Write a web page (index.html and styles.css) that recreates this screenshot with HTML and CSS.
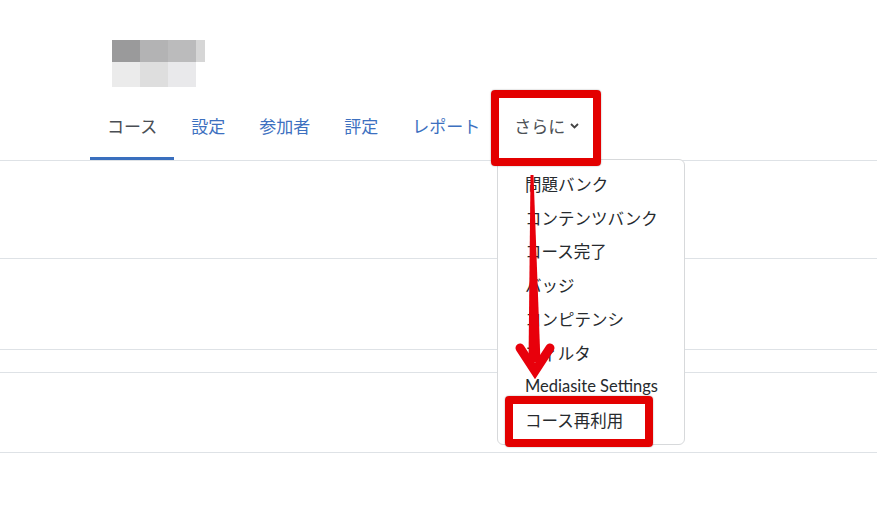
FILE: index.html
```html
<!DOCTYPE html>
<html lang="ja">
<head>
<meta charset="utf-8">
<title>コース</title>
<link rel="stylesheet" href="styles.css">
</head>
<body>
<div class="page">
  <header class="head">
    <div class="logo">
      <span class="b b1"></span><span class="b b2"></span><span class="b b3"></span><span class="b b4"></span>
      <span class="b b5"></span><span class="b b6"></span><span class="b b7"></span><span class="b b8"></span>
    </div>
  </header>
  <nav class="tabs">
    <ul class="tab-list">
      <li class="tab active">コース</li>
      <li class="tab">設定</li>
      <li class="tab">参加者</li>
      <li class="tab">評定</li>
      <li class="tab">レポート</li>
      <li class="tab more">さらに<svg class="chev" width="9" height="6" viewBox="0 0 9 6"><path d="M1 1 L4.5 4.5 L8 1" fill="none" stroke="#444" stroke-width="1.8"/></svg></li>
    </ul>
  </nav>
  <div class="sec s1"></div>
  <div class="sec s2"></div>
  <div class="sec s3"></div>
  <div class="sec s4"></div>

  <ul class="dropdown">
    <li class="dd-item">問題バンク</li>
    <li class="dd-item">コンテンツバンク</li>
    <li class="dd-item">コース完了</li>
    <li class="dd-item">バッジ</li>
    <li class="dd-item">コンピテンシ</li>
    <li class="dd-item">フィルタ</li>
    <li class="dd-item">Mediasite Settings</li>
    <li class="dd-item">コース再利用</li>
  </ul>

  <div class="mark mark-more"></div>
  <div class="mark mark-reuse"></div>
  <svg class="arrow" width="60" height="220" viewBox="505 165 60 220">
    <polygon points="530.5,175 533.5,175 540.5,362 528.5,362" fill="#e8000b"/>
    <path d="M520 348 L535 371 L550 348" fill="none" stroke="#e8000b" stroke-width="9" stroke-linecap="round" stroke-linejoin="miter"/>
  </svg>
</div>
</body>
</html>
```
FILE: styles.css
```css
html, body {
  margin: 0;
  padding: 0;
  background: #fff;
}
.page {
  position: relative;
  width: 877px;
  height: 510px;
  overflow: hidden;
  font-family: "Lato", "Noto Sans CJK JP", sans-serif;
}
.head {
  padding: 40px 0 0 112px;
}
.logo {
  display: grid;
  grid-template-columns: 28px 28px 28px 9px;
  grid-template-rows: 22px 25px;
  width: 93px;
}
.b1 { background: #9a9a9b; }
.b2 { background: #b3b3b4; }
.b3 { background: #bbbbbc; }
.b4 { background: #d6d6d6; }
.b5 { background: #ebebeb; }
.b6 { background: #dedede; }
.b7 { background: #e9e9eb; }
.b8 { background: #fff; }

.tabs {
  margin-top: 8px;
  border-bottom: 1px solid #dee2e6;
}
.tab-list {
  list-style: none;
  margin: 0;
  padding: 0 0 0 90px;
  display: flex;
  height: 65px;
}
.tab {
  display: flex;
  align-items: center;
  padding: 0 17px 5px;
  font-size: 17px;
  color: #3d70c0;
  box-sizing: border-box;
  height: 65px;
}
.tab.active {
  color: #4a4e54;
  border-bottom: 3px solid #3a6fbe;
  padding-bottom: 2px;
}
.tab.more {
  color: #4d5156;
}
.chev {
  margin-left: 5px;
  margin-top: 1px;
}
.sec {
  border-bottom: 1px solid #dee2e6;
}
.s1 { height: 97px; }
.s2 { height: 90px; }
.s3 { height: 22px; }
.s4 { height: 79px; }

.dropdown {
  position: absolute;
  left: 497px;
  top: 159px;
  width: 188px;
  height: 286px;
  box-sizing: border-box;
  margin: 0;
  padding: 7px 0;
  list-style: none;
  background: #fff;
  border: 1px solid #d7d9db;
  border-radius: 6px;
}
.dd-item {
  height: 33.75px;
  display: flex;
  align-items: center;
  padding-left: 27px;
  font-size: 16.5px;
  color: #262a2e;
  white-space: nowrap;
}
.mark {
  position: absolute;
  box-sizing: border-box;
  border: 8px solid #e30000;
  border-radius: 4px;
  box-shadow: 0 0 1.5px rgba(0, 0, 0, 0.45);
}
.mark-more {
  left: 491px;
  top: 90px;
  width: 110px;
  height: 76px;
}
.mark-reuse {
  left: 505px;
  top: 396px;
  width: 148px;
  height: 51px;
}
.arrow {
  position: absolute;
  left: 505px;
  top: 165px;
}
```
